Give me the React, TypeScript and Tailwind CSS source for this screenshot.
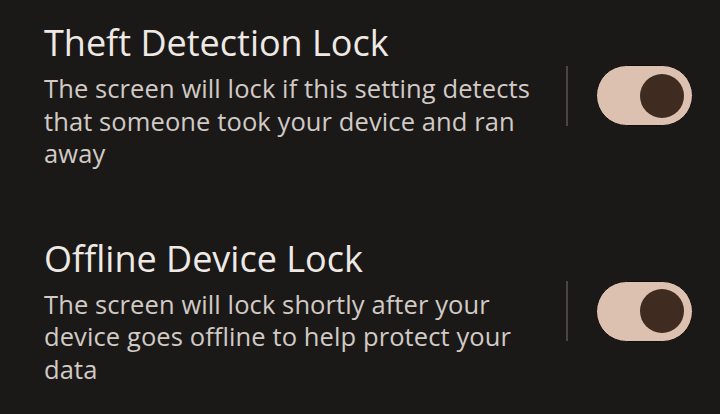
import React, { useState } from 'react';

type Item = { title: string; desc: string };

const items: Item[] = [
  {
    title: 'Theft Detection Lock',
    desc: 'The screen will lock if this setting detects that someone took your device and ran away',
  },
  {
    title: 'Offline Device Lock',
    desc: 'The screen will lock shortly after your device goes offline to help protect your data',
  },
];

const Toggle: React.FC<{ on: boolean; onClick: () => void }> = ({ on, onClick }) => (
  <button
    onClick={onClick}
    className={`w-[97px] h-[61px] rounded-full border-[1.5px] border-[#120d0a] flex items-center px-[8px] ${
      on ? 'bg-[#dcc1b1] justify-end' : 'bg-[#3a3330] justify-start'
    }`}
  >
    <span className={`block w-[44px] h-[44px] rounded-full ${on ? 'bg-[#3f2b20]' : 'bg-[#9b8f88]'}`} />
  </button>
);

export default function App() {
  const [state, setState] = useState([true, true]);

  return (
    <div
      className="w-[720px] h-[414px] bg-[#1b1918] overflow-hidden pt-[22px] flex flex-col gap-[68px]"
      style={{ fontFamily: '"Open Sans", "Noto Sans", sans-serif' }}
    >
      {items.map((it, i) => (
        <div key={it.title} className="flex items-center pl-[44px] pr-[27px]">
          <div className="w-[500px] flex flex-col gap-[8px]">
            <h2 className="text-[36px] leading-[42px] text-[#efe9e5]">{it.title}</h2>
            <p className="text-[25.5px] leading-[32.5px] text-[#d1cac5] tracking-[0.1px]">{it.desc}</p>
          </div>
          <div className="ml-auto w-[2px] h-[60px] bg-[#4a4542]" />
          <div className="ml-[28px]">
            <Toggle on={state[i]} onClick={() => setState(s => s.map((v, j) => (j === i ? !v : v)))} />
          </div>
        </div>
      ))}
    </div>
  );
}
